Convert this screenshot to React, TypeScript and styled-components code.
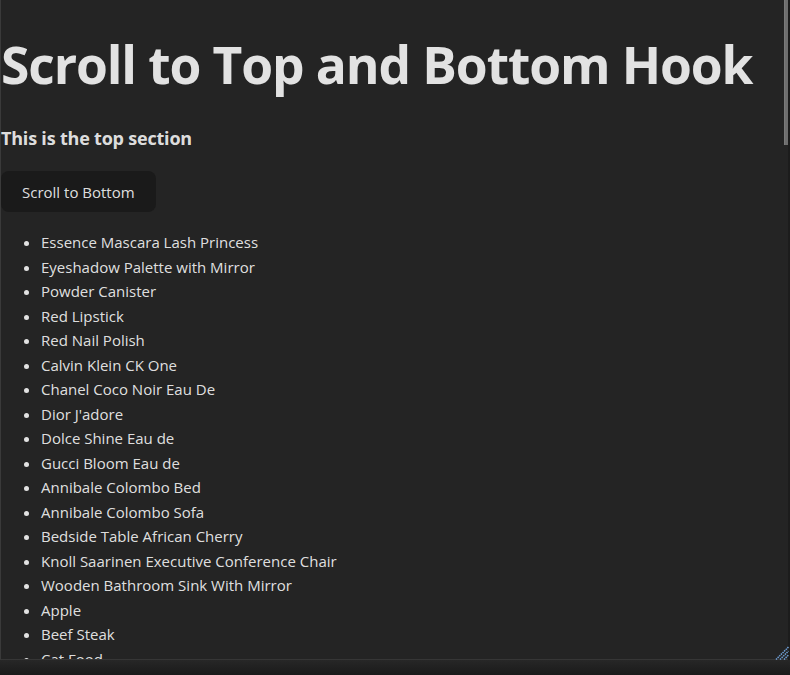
import styled, { createGlobalStyle } from "styled-components";

const products = [
    "Essence Mascara Lash Princess",
    "Eyeshadow Palette with Mirror",
    "Powder Canister",
    "Red Lipstick",
    "Red Nail Polish",
    "Calvin Klein CK One",
    "Chanel Coco Noir Eau De",
    "Dior J'adore",
    "Dolce Shine Eau de",
    "Gucci Bloom Eau de",
    "Annibale Colombo Bed",
    "Annibale Colombo Sofa",
    "Bedside Table African Cherry",
    "Knoll Saarinen Executive Conference Chair",
    "Wooden Bathroom Sink With Mirror",
    "Apple",
    "Beef Steak",
    "Cat Food",
    "Chicken Meat",
    "Cooking Oil",
    "Cucumber",
    "Dog Food",
    "Eggs",
    "Fish Steak",
    "Green Bell Pepper",
    "Green Chili Pepper",
    "Honey Jar",
    "Ice Cream",
    "Juice",
    "Kiwi",
];

const GlobalStyle = createGlobalStyle`
    html, body {
        margin: 0;
        padding: 0;
        background: #1e1e1e;
        color-scheme: dark;
    }
    body {
        font-family: 'Open Sans', 'Noto Sans', sans-serif;
        color: rgba(255, 255, 255, 0.87);
    }
`;

const Frame = styled.div`
    position: relative;
    width: 790px;
    height: 675px;
    display: flex;
    flex-direction: column;
`;

const Scroller = styled.div`
    height: 660px;
    flex: none;
    overflow-y: scroll;
    scrollbar-width: none;
    background: #242424;
    border-left: 1px solid #3a3a3a;
    border-bottom: 1px solid #363636;
    box-sizing: border-box;

    &::-webkit-scrollbar {
        display: none;
    }
`;

const BottomStrip = styled.div`
    flex: 1;
    background: linear-gradient(#272727, #1a1a1a);
`;

const Title = styled.h1`
    font-size: 51.5px;
    line-height: 58px;
    font-weight: 700;
    margin: 35px 0 0;
    white-space: nowrap;
    letter-spacing: -1.1px;
`;

const Subtitle = styled.h3`
    font-size: 18px;
    line-height: 28px;
    font-weight: 700;
    letter-spacing: -0.2px;
    margin: 31px 0 19px;
`;

const ButtonRow = styled.div`
    display: flex;
`;

const Button = styled.button`
    font-family: inherit;
    font-size: 15px;
    line-height: 22px;
    font-weight: 400;
    padding: 8.5px 20px;
    border: 1px solid transparent;
    border-radius: 8px;
    background: #1a1a1a;
    color: rgba(255, 255, 255, 0.87);
    cursor: pointer;
`;

const List = styled.ul`
    margin: 18px 0 0;
    padding-left: 40px;
    font-size: 15px;
    line-height: 24.5px;
`;

const BottomSection = styled.section`
    min-height: 1840px;
    padding-top: 16px;
`;

const ScrollTrack = styled.div`
    position: absolute;
    top: 0;
    right: 0;
    width: 6px;
    height: 660px;
    border-right: 2px solid #1c1c1c;
    box-sizing: border-box;
    pointer-events: none;
`;

const Thumb = styled.div`
    width: 4px;
    height: 145px;
    background: #6e6e6e;
    box-shadow: inset 1px 0 0 #7a7a7a;
`;

const Grip = styled.svg`
    position: absolute;
    right: 1px;
    bottom: 15px;
    width: 14px;
    height: 14px;
    pointer-events: none;
`;

export default function App() {
    return (
        <Frame>
            <GlobalStyle />
            <Scroller>
                <Title>Scroll to Top and Bottom Hook</Title>
                <Subtitle>This is the top section</Subtitle>
                <ButtonRow>
                    <Button>Scroll to Bottom</Button>
                </ButtonRow>
                <List>
                    {products.map((p) => (
                        <li key={p}>{p}</li>
                    ))}
                </List>
                <BottomSection>
                    <Subtitle>This is the bottom section</Subtitle>
                    <ButtonRow>
                        <Button>Scroll to Top</Button>
                    </ButtonRow>
                </BottomSection>
            </Scroller>
            <ScrollTrack>
                <Thumb />
            </ScrollTrack>
            <Grip viewBox="0 0 14 14">
                <g stroke="#6f9fd6" strokeWidth="1.5" strokeDasharray="1.5 0.8">
                    <line x1="1" y1="13.5" x2="13.5" y2="1" />
                    <line x1="5" y1="13.5" x2="13.5" y2="5" />
                    <line x1="9" y1="13.5" x2="13.5" y2="9" />
                </g>
            </Grip>
            <BottomStrip />
        </Frame>
    );
}
